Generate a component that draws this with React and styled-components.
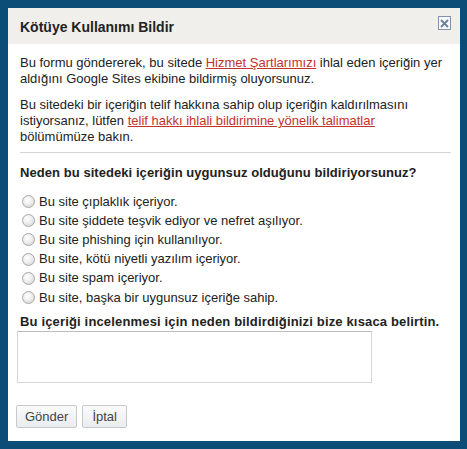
import React from "react";
import styled, { createGlobalStyle } from "styled-components";

const Global = createGlobalStyle`
  html, body { margin: 0; padding: 0; background: #0c4d78; }
  body { font-family: "Liberation Sans", Arial, sans-serif; }
`;

const Frame = styled.div`
  width: 467px;
  height: 449px;
  box-sizing: border-box;
  padding: 8px 7px 8px 8px;
  background: #0c4d78;
`;

const Dialog = styled.div`
  width: 452px;
  height: 433px;
  background: #fff;
  display: flex;
  flex-direction: column;
  color: #222;
  font-size: 13px;
  line-height: 16px;
`;

const TitleBar = styled.div`
  height: 36px;
  background: #f1efeb;
  display: flex;
  justify-content: space-between;
  align-items: flex-start;
  padding: 0 9px 0 12px;
`;

const Title = styled.div`
  align-self: center;
  font-weight: bold;
  font-size: 14px;
  color: #222;
  margin-top: 1px;
`;

const Close = styled.button`
  margin-top: 8px;
  width: 13px;
  height: 14px;
  padding: 0;
  border: 1px solid #8192ab;
  background: #f7f8fa;
  display: flex;
  align-items: center;
  justify-content: center;
  cursor: pointer;
`;

const Body = styled.div`
  padding: 11px 9px 0 12px;
  display: flex;
  flex-direction: column;
`;

const Para = styled.p`
  margin: 0 0 10px 0;
`;

const Link = styled.a`
  color: #c5322c;
  text-decoration: underline;
`;

const Rule = styled.hr`
  border: 0;
  border-top: 1px solid #d4d4d4;
  margin: -3px 0 12px 0;
  height: 0;
`;

const Heading = styled.div`
  font-weight: bold;
  color: #222;
  letter-spacing: ${(p) => p.$ls || 0}px;
`;

const Options = styled.div`
  display: flex;
  flex-direction: column;
  margin: 11px 0 7px 0;
`;

const Option = styled.label`
  display: flex;
  align-items: center;
  height: 19.2px;
  color: #222;
`;

const Radio = styled.span`
  width: 11px;
  height: 11px;
  border-radius: 50%;
  border: 1px solid #a8a8a8;
  background: radial-gradient(circle at 40% 35%, #ffffff 0%, #f0f0f0 40%, #cfcfcf 100%);
  margin: 0 4px 0 2px;
  flex: none;
`;

const TextArea = styled.textarea`
  margin: 1px 0 0 -3px;
  width: 355px;
  height: 52px;
  box-sizing: border-box;
  border: 1px solid #d6d6d6;
  border-top-color: #bcbcbc;
  resize: none;
  font-family: inherit;
  font-size: 13px;
`;

const Buttons = styled.div`
  display: flex;
  gap: 5px;
  margin: 22px 0 0 -4px;
`;

const Button = styled.button`
  height: 23px;
  padding: 0 ${(p) => p.$pad}px;
  border: 1px solid #c8c8c8;
  border-radius: 2px;
  background: linear-gradient(#fbfbfb, #e9ecef);
  color: #444;
  font-family: "Liberation Sans", Arial, sans-serif;
  font-size: 13px;
  cursor: pointer;
`;

const reasons = [
  "Bu site çıplaklık içeriyor.",
  "Bu site şiddete teşvik ediyor ve nefret aşılıyor.",
  "Bu site phishing için kullanılıyor.",
  "Bu site, kötü niyetli yazılım içeriyor.",
  "Bu site spam içeriyor.",
  "Bu site, başka bir uygunsuz içeriğe sahip.",
];

export default function App() {
  return (
    <>
      <Global />
      <Frame>
        <Dialog>
          <TitleBar>
            <Title>Kötüye Kullanımı Bildir</Title>
            <Close aria-label="Kapat">
              <svg width="9" height="9" viewBox="0 0 9 9">
                <path d="M1 1L8 8M8 1L1 8" stroke="#6c7f99" strokeWidth="1.8" />
              </svg>
            </Close>
          </TitleBar>
          <Body>
            <Para>
              Bu formu göndererek, bu sitede <Link href="#">Hizmet Şartlarımızı</Link> ihlal eden içeriğin yer
              aldığını Google Sites ekibine bildirmiş oluyorsunuz.
            </Para>
            <Para>
              Bu sitedeki bir içeriğin telif hakkına sahip olup içeriğin kaldırılmasını istiyorsanız, lütfen{" "}
              <Link href="#">telif hakkı ihlali bildirimine yönelik talimatlar</Link> bölümümüze bakın.
            </Para>
            <Rule />
            <Heading $ls={0.06}>Neden bu sitedeki içeriğin uygunsuz olduğunu bildiriyorsunuz?</Heading>
            <Options>
              {reasons.map((r) => (
                <Option key={r}>
                  <Radio />
                  {r}
                </Option>
              ))}
            </Options>
            <Heading $ls={0.16}>Bu içeriği incelenmesi için neden bildirdiğinizi bize kısaca belirtin.</Heading>
            <TextArea />
            <Buttons>
              <Button $pad={8}>Gönder</Button>
              <Button $pad={9}>İptal</Button>
            </Buttons>
          </Body>
        </Dialog>
      </Frame>
    </>
  );
}
